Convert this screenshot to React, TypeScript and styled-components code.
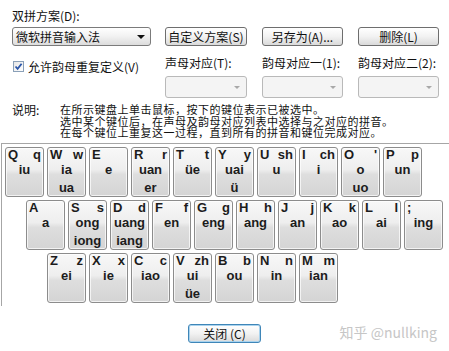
import styled, { createGlobalStyle } from "styled-components";

interface KeyData {
  cap: string;
  sheng: string;
  yun: string[];
}

const GlobalStyle = createGlobalStyle`
  body {
    margin: 0;
    background: #ffffff;
    font-family: "Noto Sans CJK SC", "Liberation Sans", sans-serif;
    font-size: 12px;
    color: #111;
  }
`;

const Window = styled.div`
  position: relative;
  width: 449px;
  height: 351px;
  background: #ffffff;
  overflow: hidden;
`;

const Top = styled.div`
  padding: 9px 10px 0 12px;
`;

const Label = styled.div`
  line-height: 14px;
  height: 14px;
  white-space: nowrap;
`;

const Grid = styled.div`
  display: grid;
  grid-template-columns: 153px 97px 96px 81px;
  row-gap: 10px;
  margin-top: 4px;
`;

const Combo = styled.div`
  width: 139px;
  height: 19px;
  box-sizing: border-box;
  border: 1px solid #7b7b7b;
  border-radius: 3px;
  background: linear-gradient(#ffffff, #f1f1f1 50%, #dcdcdc);
  display: flex;
  align-items: center;
  justify-content: space-between;
  padding: 0 5px 0 3px;
  line-height: 17px;
`;

const Arrow = styled.span<{ $disabled?: boolean }>`
  width: 0;
  height: 0;
  border-left: ${(p) => (p.$disabled ? 3 : 4)}px solid transparent;
  border-right: ${(p) => (p.$disabled ? 3 : 4)}px solid transparent;
  border-top: ${(p) => (p.$disabled ? 3 : 4)}px solid
    ${(p) => (p.$disabled ? "#a8a8a8" : "#111")};
`;

const Button = styled.div<{ $w: number; $default?: boolean }>`
  width: ${(p) => p.$w}px;
  height: 19px;
  box-sizing: border-box;
  border: 1px solid ${(p) => (p.$default ? "#3f86b8" : "#6e6e6e")};
  border-radius: 3px;
  background: linear-gradient(#ffffff, #f2f2f2 50%, #dadada);
  box-shadow: ${(p) => (p.$default ? "inset 0 0 0 1px #a9d3ee" : "none")};
  text-align: center;
  line-height: 17px;
  white-space: nowrap;
`;

const CheckCell = styled.div`
  display: flex;
  align-items: flex-start;
  gap: 4px;
  padding-top: 5px;
  line-height: 12px;
  white-space: nowrap;
`;

const CheckBox = styled.span`
  width: 11px;
  height: 11px;
  box-sizing: border-box;
  border: 1px solid #8aa0b8;
  background: linear-gradient(135deg, #e6e6e6, #ffffff);
  display: flex;
  align-items: center;
  justify-content: center;
  margin-left: 1px;
`;

const FieldCell = styled.div`
  display: flex;
  flex-direction: column;
  gap: 6px;
`;

const DisabledSelect = styled.div<{ $w: number }>`
  width: ${(p) => p.$w}px;
  height: 22px;
  box-sizing: border-box;
  border: 1px solid #b9b9b9;
  border-radius: 3px;
  background: #f4f4f4;
  display: flex;
  align-items: center;
  justify-content: flex-end;
  padding-right: 6px;
`;

const Note = styled.div`
  display: flex;
  margin-top: 6px;
  font-size: 11px;
  line-height: 11.5px;
`;

const NoteTitle = styled.div`
  width: 48px;
  flex: none;
  font-size: 12px;
`;

const NoteBody = styled.div`
  white-space: nowrap;
  letter-spacing: 0.5px;
`;

const Keyboard = styled.div`
  margin: 4px 0 0 1px;
  border-top: 1px solid #a6a6a6;
  border-left: 1px solid #a6a6a6;
  padding: 3px 0 3px 0;
  display: flex;
  flex-direction: column;
  gap: 3px;
`;

const KeyRow = styled.div<{ $indent: number }>`
  display: flex;
  gap: 3px;
  padding-left: ${(p) => p.$indent}px;
`;

const Key = styled.div`
  width: 39px;
  height: 50px;
  box-sizing: border-box;
  border: 1px solid #8c8c8c;
  border-radius: 3px;
  background: linear-gradient(#f8f8f8, #eeeeee 45%, #dedede 55%, #d4d4d4);
  box-shadow: inset 0 0 0 1px rgba(255, 255, 255, 0.7);
  font-family: "Liberation Sans", Arial, sans-serif;
  font-weight: bold;
  font-size: 13px;
  color: #1c1c1c;
  padding: 0 2px;
`;

const KeyHead = styled.div`
  display: flex;
  justify-content: space-between;
  line-height: 13px;
`;

const Yun = styled.div`
  text-align: center;
  line-height: 18px;
`;

const Footer = styled.div`
  display: flex;
  justify-content: center;
  margin-top: 18px;
`;

const Watermark = styled.div`
  position: absolute;
  right: 12px;
  bottom: 9px;
  font-size: 14px;
  color: #c6c6c6;
  white-space: nowrap;
`;

const rows: { indent: number; keys: KeyData[] }[] = [
  {
    indent: 3,
    keys: [
      { cap: "Q", sheng: "q", yun: ["iu"] },
      { cap: "W", sheng: "w", yun: ["ia", "ua"] },
      { cap: "E", sheng: "", yun: ["e"] },
      { cap: "R", sheng: "r", yun: ["uan", "er"] },
      { cap: "T", sheng: "t", yun: ["üe"] },
      { cap: "Y", sheng: "y", yun: ["uai", "ü"] },
      { cap: "U", sheng: "sh", yun: ["u"] },
      { cap: "I", sheng: "ch", yun: ["i"] },
      { cap: "O", sheng: "'", yun: ["o", "uo"] },
      { cap: "P", sheng: "p", yun: ["un"] },
    ],
  },
  {
    indent: 24,
    keys: [
      { cap: "A", sheng: "", yun: ["a"] },
      { cap: "S", sheng: "s", yun: ["ong", "iong"] },
      { cap: "D", sheng: "d", yun: ["uang", "iang"] },
      { cap: "F", sheng: "f", yun: ["en"] },
      { cap: "G", sheng: "g", yun: ["eng"] },
      { cap: "H", sheng: "h", yun: ["ang"] },
      { cap: "J", sheng: "j", yun: ["an"] },
      { cap: "K", sheng: "k", yun: ["ao"] },
      { cap: "L", sheng: "l", yun: ["ai"] },
      { cap: ";", sheng: "", yun: ["ing"] },
    ],
  },
  {
    indent: 45,
    keys: [
      { cap: "Z", sheng: "z", yun: ["ei"] },
      { cap: "X", sheng: "x", yun: ["ie"] },
      { cap: "C", sheng: "c", yun: ["iao"] },
      { cap: "V", sheng: "zh", yun: ["ui", "üe"] },
      { cap: "B", sheng: "b", yun: ["ou"] },
      { cap: "N", sheng: "n", yun: ["in"] },
      { cap: "M", sheng: "m", yun: ["ian"] },
    ],
  },
];

function App() {
  return (
    <Window>
      <GlobalStyle />
      <Top>
        <Label>双拼方案(D):</Label>
        <Grid>
          <Combo>
            <span>微软拼音输入法</span>
            <Arrow />
          </Combo>
          <Button $w={82}>自定义方案(S)</Button>
          <Button $w={81}>另存为(A)...</Button>
          <Button $w={81}>删除(L)</Button>

          <CheckCell>
            <CheckBox>
              <svg width="9" height="9" viewBox="0 0 9 9">
                <path
                  d="M1.5 4.5 L3.6 6.8 L7.6 1.8"
                  fill="none"
                  stroke="#2a55a8"
                  strokeWidth="1.8"
                />
              </svg>
            </CheckBox>
            <span>允许韵母重复定义(V)</span>
          </CheckCell>
          <FieldCell>
            <Label>声母对应(T):</Label>
            <DisabledSelect $w={82}>
              <Arrow $disabled />
            </DisabledSelect>
          </FieldCell>
          <FieldCell>
            <Label>韵母对应一(1):</Label>
            <DisabledSelect $w={81}>
              <Arrow $disabled />
            </DisabledSelect>
          </FieldCell>
          <FieldCell>
            <Label>韵母对应二(2):</Label>
            <DisabledSelect $w={81}>
              <Arrow $disabled />
            </DisabledSelect>
          </FieldCell>
        </Grid>
        <Note>
          <NoteTitle>说明:</NoteTitle>
          <NoteBody>
            在所示键盘上单击鼠标，按下的键位表示已被选中。
            <br />
            选中某个键位后，在声母及韵母对应列表中选择与之对应的拼音。
            <br />
            在每个键位上重复这一过程，直到所有的拼音和键位完成对应。
          </NoteBody>
        </Note>
      </Top>
      <Keyboard>
        {rows.map((row, ri) => (
          <KeyRow key={ri} $indent={row.indent}>
            {row.keys.map((k) => (
              <Key key={k.cap}>
                <KeyHead>
                  <span>{k.cap}</span>
                  <span>{k.sheng}</span>
                </KeyHead>
                {k.yun.map((y) => (
                  <Yun key={y}>{y}</Yun>
                ))}
              </Key>
            ))}
          </KeyRow>
        ))}
      </Keyboard>
      <Footer>
        <Button $w={73} $default>
          关闭 (C)
        </Button>
      </Footer>
      <Watermark>知乎 @nullking</Watermark>
    </Window>
  );
}

export default App;
